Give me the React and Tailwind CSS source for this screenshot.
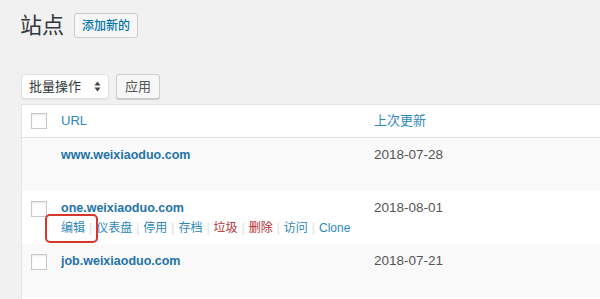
import React from 'react';

const sites = [
    { url: 'www.weixiaoduo.com', date: '2018-07-28', main: true },
    { url: 'one.weixiaoduo.com', date: '2018-08-01', actions: true },
    { url: 'job.weixiaoduo.com', date: '2018-07-21' },
];

const actions = [
    { label: '编辑' },
    { label: '仪表盘' },
    { label: '停用' },
    { label: '存档' },
    { label: '垃圾', red: true },
    { label: '删除', red: true },
    { label: '访问' },
    { label: 'Clone' },
];

const Checkbox = () => (
    <span className="block w-[16px] h-[16px] bg-white border border-[#c6c9cc] shadow-[inset_0_1px_2px_rgba(0,0,0,0.1)]"></span>
);

const App = () => {
    return (
        <div
            className="w-[600px] h-[299px] overflow-hidden bg-[#f1f1f1] text-[#444]"
            style={{ fontFamily: '"Liberation Sans", "Noto Sans CJK SC", sans-serif' }}
        >
            {/* Heading */}
            <div className="flex items-center gap-[10px] pl-[20px] pt-[13px] h-[38px]">
                <h1 className="text-[22px] leading-none text-[#32373c]">站点</h1>
                <button className="h-[25px] px-[7px] bg-[#f7f7f7] border border-[#ccc] rounded-[3px] text-[12px] font-medium text-[#0073aa] leading-none">
                    添加新的
                </button>
            </div>

            {/* Bulk actions */}
            <div className="flex items-center gap-[7px] pl-[21px] mt-[36px] h-[25px]">
                <div className="w-[88px] h-[25px] bg-white border border-[#e2e2e2] rounded-[4px] shadow-[0_1px_1px_rgba(0,0,0,0.06)] flex items-center justify-between pl-[7px] pr-[7px]">
                    <span className="text-[13px] text-[#32373c]">批量操作</span>
                    <svg width="7" height="11" viewBox="0 0 7 11">
                        <path d="M3.5 0.5 L6.5 4.5 L0.5 4.5 Z" fill="#444" />
                        <path d="M3.5 10.5 L6.5 6.5 L0.5 6.5 Z" fill="#444" />
                    </svg>
                </div>
                <button className="w-[44px] h-[25px] bg-[#f7f7f7] border border-[#ccc] rounded-[3px] shadow-[0_1px_0_#ccc] text-[13px] text-[#555] leading-none">
                    应用
                </button>
            </div>

            {/* Table */}
            <div className="ml-[21px] mt-[5px] bg-white border border-[#e5e5e5] border-r-0 shadow-[0_1px_1px_rgba(0,0,0,0.04)]">
                <div className="flex items-center h-[33px] border-b border-[#e1e1e1]">
                    <div className="w-[39px] pl-[9px]"><Checkbox /></div>
                    <div className="w-[313px] text-[13px] text-[#2e87bd]">URL</div>
                    <div className="text-[13px] text-[#2e87bd]">上次更新</div>
                </div>

                {sites.map((site, idx) => (
                    <div
                        key={site.url}
                        className={`relative flex h-[53px] ${idx % 2 === 0 ? 'bg-[#f9f9f9]' : 'bg-white'}`}
                    >
                        <div className="w-[39px] pl-[9px] pt-[10px]">
                            {!site.main && <Checkbox />}
                        </div>
                        <div className="w-[313px] pt-[7px]">
                            <a className="block text-[12.5px] font-bold leading-[20px] text-[#1f73a8]">{site.url}</a>
                            {site.actions && (
                                <div className="flex items-center text-[12px] leading-[20px]">
                                    {actions.map((a, i) => (
                                        <span key={a.label} className="flex items-center">
                                            {i > 0 && <span className="text-[#ddd] px-[4px]">|</span>}
                                            <span className={a.red ? 'text-[#b32d2e]' : 'text-[#2e87bd]'}>{a.label}</span>
                                        </span>
                                    ))}
                                </div>
                            )}
                        </div>
                        <div className="pt-[7px] text-[13.5px] leading-[20px] text-[#555]">{site.date}</div>
                        {site.actions && (
                            <span className="absolute left-[23px] top-[23px] w-[53px] h-[29px] border-2 border-[#d9362b] rounded-[5px]"></span>
                        )}
                    </div>
                ))}
                <div className="h-[20px] bg-white"></div>
            </div>
        </div>
    );
};

export default App;
